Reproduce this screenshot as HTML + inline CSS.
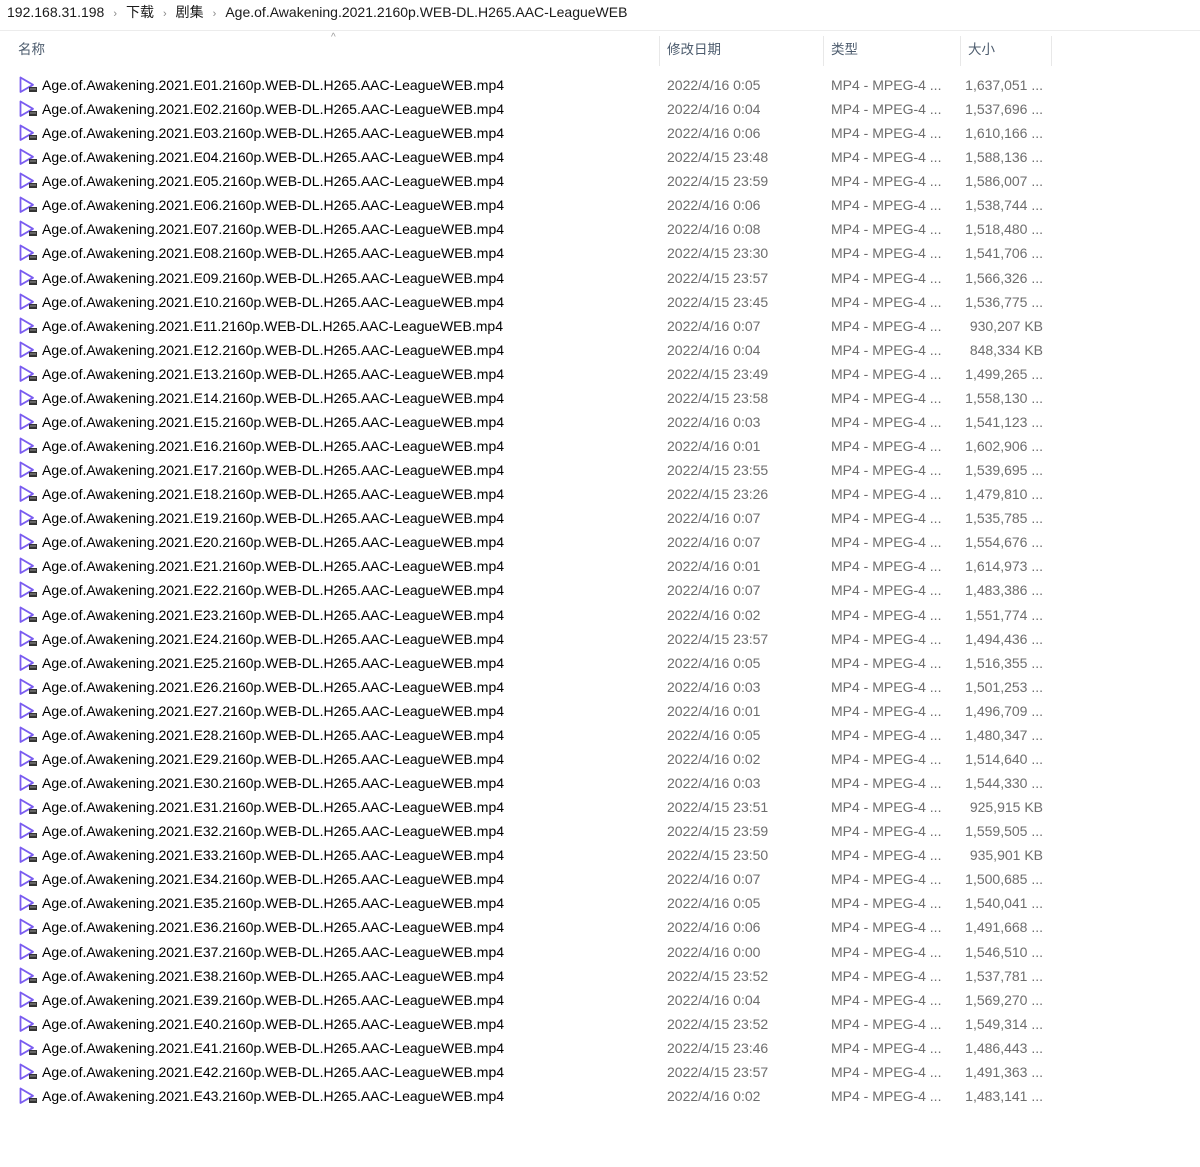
<!DOCTYPE html>
<html><head><meta charset="utf-8"><style>
*{margin:0;padding:0;box-sizing:border-box}
body{width:1200px;height:1167px;background:#fff;font-family:"Liberation Sans","Noto Sans CJK SC",sans-serif;position:relative;overflow:hidden;color:#000}
.bc{position:absolute;left:7px;top:3px;font-size:14px;line-height:18px;color:#1a1a1a;white-space:nowrap}
.bc .s{color:#888;font-size:11px;margin:0 9px}
.hr{position:absolute;left:0;top:30px;width:1200px;height:1px;background:#ececec}
.hd{position:absolute;top:41px;font-size:13.5px;color:#4d5c6e;line-height:18px}
.sep{position:absolute;top:36px;width:1px;height:30px;background:#e8e8e8}
.row{position:absolute;left:0;height:24px;width:1100px;font-size:14px;line-height:18px;white-space:nowrap}
.row span{position:absolute;top:3px}
.n{left:42px;letter-spacing:0px;color:#000}
.d{left:667px;color:#6d6d6d}
.t{left:831px;color:#6d6d6d}
.z{right:57px;color:#6d6d6d;text-align:right}
.row svg{position:absolute;left:18px;top:3px}
</style></head><body>
<div class="bc">192.168.31.198<span class="s">›</span>下载<span class="s">›</span>剧集<span class="s">›</span>Age.of.Awakening.2021.2160p.WEB-DL.H265.AAC-LeagueWEB</div>
<div class="hr"></div>
<div style="position:absolute;left:331px;top:32px;font-size:10px;color:#999">^</div>
<div class="hd" style="left:18px">名称</div>
<div class="sep" style="left:659px"></div>
<div class="hd" style="left:667px">修改日期</div>
<div class="sep" style="left:823px"></div>
<div class="hd" style="left:831px">类型</div>
<div class="sep" style="left:960px"></div>
<div class="hd" style="left:968px">大小</div>
<div class="sep" style="left:1051px"></div>
<div id="list"></div>
<script>
(function(){
var d=[["0:05","16","1,637,051 ..."],["0:04","16","1,537,696 ..."],["0:06","16","1,610,166 ..."],["23:48","15","1,588,136 ..."],["23:59","15","1,586,007 ..."],["0:06","16","1,538,744 ..."],["0:08","16","1,518,480 ..."],["23:30","15","1,541,706 ..."],["23:57","15","1,566,326 ..."],["23:45","15","1,536,775 ..."],["0:07","16","930,207 KB"],["0:04","16","848,334 KB"],["23:49","15","1,499,265 ..."],["23:58","15","1,558,130 ..."],["0:03","16","1,541,123 ..."],["0:01","16","1,602,906 ..."],["23:55","15","1,539,695 ..."],["23:26","15","1,479,810 ..."],["0:07","16","1,535,785 ..."],["0:07","16","1,554,676 ..."],["0:01","16","1,614,973 ..."],["0:07","16","1,483,386 ..."],["0:02","16","1,551,774 ..."],["23:57","15","1,494,436 ..."],["0:05","16","1,516,355 ..."],["0:03","16","1,501,253 ..."],["0:01","16","1,496,709 ..."],["0:05","16","1,480,347 ..."],["0:02","16","1,514,640 ..."],["0:03","16","1,544,330 ..."],["23:51","15","925,915 KB"],["23:59","15","1,559,505 ..."],["23:50","15","935,901 KB"],["0:07","16","1,500,685 ..."],["0:05","16","1,540,041 ..."],["0:06","16","1,491,668 ..."],["0:00","16","1,546,510 ..."],["23:52","15","1,537,781 ..."],["0:04","16","1,569,270 ..."],["23:52","15","1,549,314 ..."],["23:46","15","1,486,443 ..."],["23:57","15","1,491,363 ..."],["0:02","16","1,483,141 ..."]];
var h="",ic='<svg width="20" height="18" viewBox="0 0 20 18"><path d="M2.5 1.5 L2.5 16 L15 8.8 Z" fill="none" stroke="#7a5cf0" stroke-width="1.8" stroke-linejoin="round"/><rect x="11" y="11" width="8" height="5" fill="#333"/><rect x="12" y="12.5" width="6" height="1" fill="#999"/></svg>';
for(var i=0;i<d.length;i++){var e=("0"+(i+1)).slice(-2);var y=(73+i*24.07).toFixed(2);
h+='<div class="row" style="top:'+y+'px">'+ic+'<span class="n">Age.of.Awakening.2021.E'+e+'.2160p.WEB-DL.H265.AAC-LeagueWEB.mp4</span><span class="d">2022/4/'+d[i][1]+' '+d[i][0]+'</span><span class="t">MP4 - MPEG-4 ...</span><span class="z">'+d[i][2]+'</span></div>';}
document.getElementById("list").innerHTML=h;
})();
</script>
</body></html>
